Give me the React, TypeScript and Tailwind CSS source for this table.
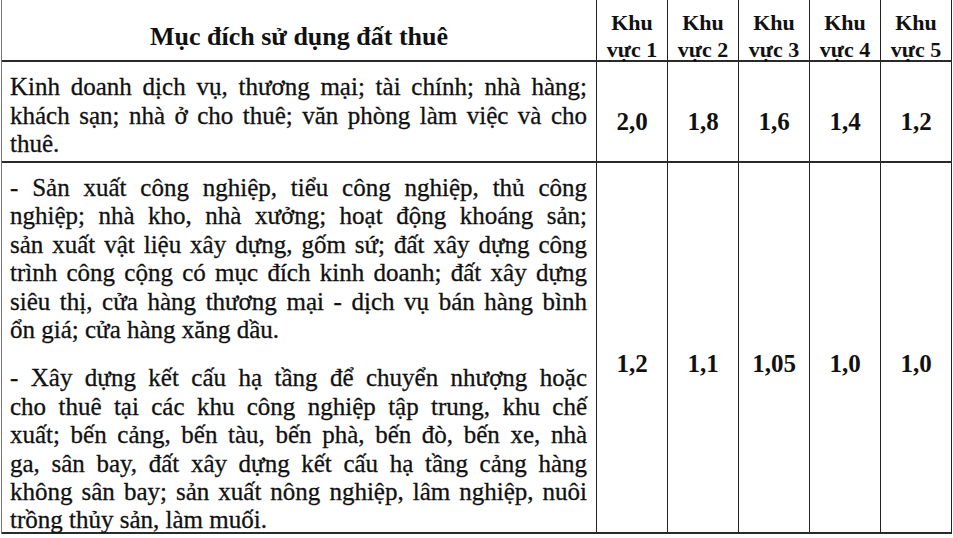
const serif = "[font-family:'Liberation_Serif','DejaVu_Serif',serif]";

const zones = ["vực 1", "vực 2", "vực 3", "vực 4", "vực 5"];
const row1Values = ["2,0", "1,8", "1,6", "1,4", "1,2"];
const row2Values = ["1,2", "1,1", "1,05", "1,0", "1,0"];

const row1Lines = [
  "Kinh doanh dịch vụ, thương mại; tài chính; nhà hàng;",
  "khách sạn; nhà ở cho thuê; văn phòng làm việc và cho",
  "thuê.",
];

const para1 = [
  "- Sản xuất công nghiệp, tiểu công nghiệp, thủ công",
  "nghiệp; nhà kho, nhà xưởng; hoạt động khoáng sản;",
  "sản xuất vật liệu xây dựng, gốm sứ; đất xây dựng công",
  "trình công cộng có mục đích kinh doanh; đất xây dựng",
  "siêu thị, cửa hàng thương mại - dịch vụ bán hàng bình",
  "ổn giá; cửa hàng xăng dầu.",
];

const para2 = [
  "- Xây dựng kết cấu hạ tầng để chuyển nhượng hoặc",
  "cho thuê tại các khu công nghiệp tập trung, khu chế",
  "xuất; bến cảng, bến tàu, bến phà, bến đò, bến xe, nhà",
  "ga, sân bay, đất xây dựng kết cấu hạ tầng cảng hàng",
  "không sân bay; sản xuất nông nghiệp, lâm nghiệp, nuôi",
  "trồng thủy sản, làm muối.",
];

// each printed line is its own block so the breaks match the scan
const Lines = ({ lines }: { lines: string[] }) => (
  <>
    {lines.map((l, i) => (
      <div
        key={i}
        className={i < lines.length - 1 ? "text-justify [text-align-last:justify]" : "text-left"}
      >
        {l}
      </div>
    ))}
  </>
);

export default function App() {
  return (
    <div className={`w-[953px] h-[538px] bg-white text-[#111] overflow-hidden ${serif}`}>
      <div className="ml-[1px] w-[951px] border-l border-[#777]">
        {/* header */}
        <div className="flex h-[62px] border-b-2 border-[#2a2a2a]">
          <div className="w-[595px] shrink-0 border-r border-[#222] pt-[23px] text-center text-[26px] leading-[28px] font-bold">
            Mục đích sử dụng đất thuê
          </div>
          {zones.map((z) => (
            <div
              key={z}
              className="w-[71px] shrink-0 border-r border-[#222] pt-[9px] text-center text-[22px] leading-[27px] font-bold whitespace-nowrap"
            >
              <div>Khu</div>
              <div>{z}</div>
            </div>
          ))}
        </div>

        {/* row 1 */}
        <div className="flex h-[101px] border-b-2 border-[#2a2a2a]">
          <div className="w-[595px] shrink-0 border-r border-[#222] pl-[8px] pr-[9px] pt-[11px] text-[25px] leading-[28.5px] [-webkit-text-stroke:0.3px_#111]">
            <Lines lines={row1Lines} />
          </div>
          {row1Values.map((v, i) => (
            <div
              key={i}
              className="w-[71px] shrink-0 border-r border-[#222] pt-[45px] text-center text-[25px] leading-[29px] font-bold"
            >
              {v}
            </div>
          ))}
        </div>

        {/* row 2 */}
        <div className="flex h-[371px] border-b-2 border-[#2a2a2a]">
          <div className="w-[595px] shrink-0 border-r border-[#222] pl-[8px] pr-[9px] pt-[11px] text-[25px] leading-[28.4px] [-webkit-text-stroke:0.3px_#111]">
            <Lines lines={para1} />
            <div className="mt-[20px]">
              <Lines lines={para2} />
            </div>
          </div>
          {row2Values.map((v, i) => (
            <div
              key={i}
              className="w-[71px] shrink-0 border-r border-[#222] pt-[186px] text-center text-[25px] leading-[29px] font-bold"
            >
              {v}
            </div>
          ))}
        </div>
      </div>
    </div>
  );
}
